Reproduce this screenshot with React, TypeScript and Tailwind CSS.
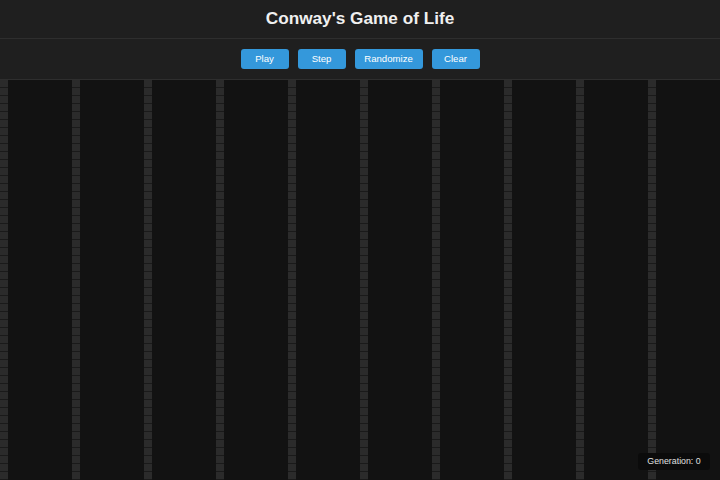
import React from "react";

const columns = Array.from({ length: 10 }, (_, i) => i);

export default function App() {
  return (
    <div className="flex h-[480px] w-[720px] flex-col overflow-hidden bg-[#121212] font-['Liberation_Sans',Arial,sans-serif]">
      <header className="flex h-[39px] items-center justify-center border-b border-[#2e2e2e] bg-[#1f1f1f]">
        <h1 className="text-[17.2px] font-bold text-[#f0f0f0]">Conway's Game of Life</h1>
      </header>

      <div className="flex h-[41px] items-center justify-center gap-[9px] border-b border-[#2e2e2e] bg-[#1f1f1f]">
        <ControlButton label="Play" width="w-[48px]" />
        <ControlButton label="Step" width="w-[48px]" />
        <ControlButton label="Randomize" width="w-[68px]" />
        <ControlButton label="Clear" width="w-[48px]" />
      </div>

      <div className="relative grid flex-1 grid-cols-10">
        {columns.map((c) => (
          <div key={c} className="flex">
            <div className="w-[8px] bg-[#2a2a2a] bg-[repeating-linear-gradient(180deg,#2b2b2b_0px,#2b2b2b_7px,#1a1a1a_7px,#1a1a1a_8px)]" />
            <div className="flex-1 bg-[#121212]" />
          </div>
        ))}

        <div className="absolute bottom-[10px] right-[10px] flex h-[17px] w-[72px] items-center justify-center rounded-[3px] bg-[#0b0b0b] text-[8.8px] text-[#e0e0e0]">
          Generation: 0
        </div>
      </div>
    </div>
  );
}

function ControlButton({ label, width }: { label: string; width: string }) {
  return (
    <button className={`${width} h-[20px] rounded-[3px] bg-[#3498db] text-[9.6px] text-white`}>
      {label}
    </button>
  );
}
